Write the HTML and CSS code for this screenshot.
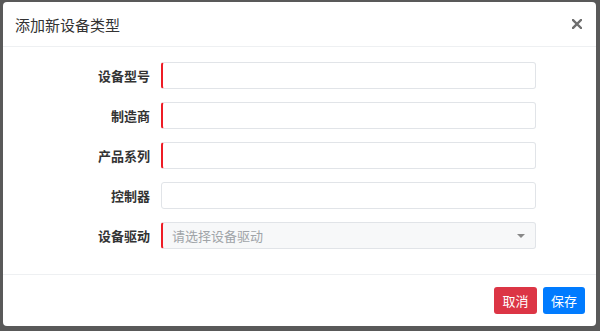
FILE: index.html
```html
<!DOCTYPE html>
<html lang="zh">
<head>
<meta charset="utf-8">
<link rel="stylesheet" href="styles.css">
</head>
<body>
<div class="modal">
  <div class="modal-header">
    <h4 class="modal-title">添加新设备类型</h4>
    <span class="close"><svg width="10" height="10" viewBox="0 0 10 10"><path d="M1 1L9 9M9 1L1 9" stroke="#6f6f6f" stroke-width="2.4" stroke-linecap="square"/></svg></span>
  </div>
  <div class="modal-body">
    <div class="form">
      <label class="label">设备型号</label>
      <div class="input required"></div>
      <label class="label">制造商</label>
      <div class="input required"></div>
      <label class="label">产品系列</label>
      <div class="input required"></div>
      <label class="label">控制器</label>
      <div class="input"></div>
      <label class="label">设备驱动</label>
      <div class="input select required"><span class="placeholder">请选择设备驱动</span><span class="caret"></span></div>
    </div>
  </div>
  <div class="modal-footer">
    <button class="btn btn-danger">取消</button>
    <button class="btn btn-primary">保存</button>
  </div>
</div>
</body>
</html>
```
FILE: styles.css
```css
* { box-sizing: border-box; }
html, body { margin: 0; padding: 0; }
body {
  width: 600px;
  height: 331px;
  background: #595959;
  padding: 2px 4px 0 3px;
  font-family: "Noto Sans CJK SC", "Noto Sans", sans-serif;
  color: #333;
  overflow: hidden;
}
.modal {
  width: 593px;
  height: 324px;
  background: #fff;
  border-radius: 4px;
  display: flex;
  flex-direction: column;
}
.modal-header {
  height: 45px;
  border-bottom: 1px solid #eef0f2;
  display: flex;
  align-items: center;
  justify-content: space-between;
  padding: 0 14px 0 12px;
}
.modal-title {
  margin: 0;
  font-size: 15px;
  font-weight: 400;
  color: #333;
  line-height: 1;
}
.close { display: flex; width: 10px; height: 10px; margin-top: -1px; }
.modal-body {
  flex: 1;
  padding: 15px 15px 0 15px;
}
.form {
  display: grid;
  grid-template-columns: 132px 375px;
  column-gap: 11px;
  row-gap: 13px;
}
.label {
  font-size: 13px;
  font-weight: 700;
  color: #333;
  text-align: right;
  line-height: 27px;
}
.input {
  height: 27px;
  border: 1px solid #e1e4e8;
  border-radius: 3px;
  background: #fff;
}
.input.required { border-left: 2px solid #ee1c25; }
.select {
  background: #f7f8f9;
  display: flex;
  align-items: center;
  justify-content: space-between;
  padding: 0 10px 0 9px;
}
.placeholder { font-size: 13px; color: #a0a4a8; }
.caret {
  width: 0; height: 0;
  border-left: 4px solid transparent;
  border-right: 4px solid transparent;
  border-top: 4px solid #888;
}
.modal-footer {
  height: 52px;
  border-top: 1px solid #eef0f2;
  display: flex;
  justify-content: flex-end;
  align-items: flex-start;
  gap: 6px;
  padding: 12px 11px 0 0;
}
.btn {
  height: 27px;
  border: none;
  border-radius: 3px;
  color: #fff;
  font-family: "Noto Sans CJK SC", sans-serif;
  font-size: 13px;
  padding: 0 8px;
  line-height: 27px;
}
.btn-danger { background: #dc3545; width: 43px; }
.btn-primary { background: #007bff; width: 42px; }
```
